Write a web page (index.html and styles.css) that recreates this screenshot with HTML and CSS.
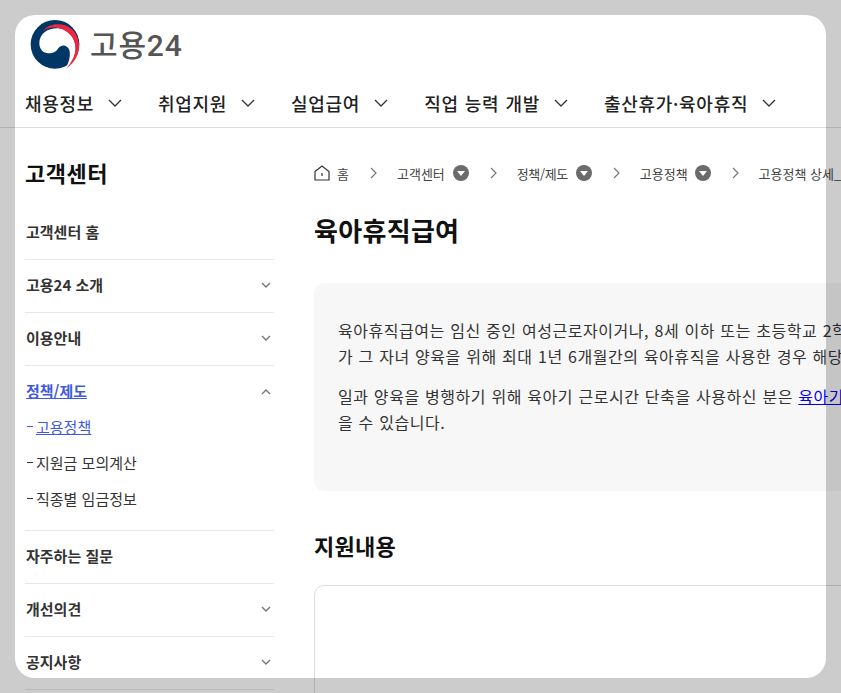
FILE: index.html
```html
<!DOCTYPE html>
<html lang="ko">
<head>
<meta charset="utf-8">
<title>고용24</title>
<link rel="stylesheet" href="styles.css">
</head>
<body>
<div class="page">
  <header class="header">
    <div class="brand">
      <svg class="logo" viewBox="0 0 150 150" aria-hidden="true">
        <circle cx="75" cy="73" r="73" fill="#003764"/>
        <path d="M28 70C28 40 55 25 80 25C115 25 137 55 137 85C137 110 125 130 108 142C118 125 122 105 118 90C112 75 95 72 85 85C78 97 68 100 55 100C40 100 28 88 28 70Z" fill="#fff"/>
        <path d="M38 34C55 10 100 4 128 30C156 58 156 115 108 146C142 110 144 70 122 46C97 18 57 17 38 34Z" fill="#ee2644"/>
      </svg>
      <span class="brand-name">고용24</span>
    </div>
    <nav class="gnb">
      <a class="gnb-item">채용정보<svg class="chev" viewBox="0 0 14 8"><path d="M1 1l6 6 6-6"/></svg></a>
      <a class="gnb-item">취업지원<svg class="chev" viewBox="0 0 14 8"><path d="M1 1l6 6 6-6"/></svg></a>
      <a class="gnb-item">실업급여<svg class="chev" viewBox="0 0 14 8"><path d="M1 1l6 6 6-6"/></svg></a>
      <a class="gnb-item">직업 능력 개발<svg class="chev" viewBox="0 0 14 8"><path d="M1 1l6 6 6-6"/></svg></a>
      <a class="gnb-item">출산휴가·육아휴직<svg class="chev" viewBox="0 0 14 8"><path d="M1 1l6 6 6-6"/></svg></a>
    </nav>
  </header>
  <div class="main">
    <aside class="side">
      <h2 class="side-title">고객센터</h2>
      <ul class="side-list">
        <li class="side-row"><span>고객센터 홈</span></li>
        <li class="side-row"><span>고용24 소개</span><svg class="mini" viewBox="0 0 10 6"><path d="M1 1l4 4 4-4"/></svg></li>
        <li class="side-row"><span>이용안내</span><svg class="mini" viewBox="0 0 10 6"><path d="M1 1l4 4 4-4"/></svg></li>
        <li class="side-group">
          <div class="side-row side-open"><a class="side-active">정책/제도</a><svg class="mini" viewBox="0 0 10 6"><path d="M1 5l4-4 4 4"/></svg></div>
          <ul class="sub-list">
            <li class="sub-item sub-current"><span class="dash"></span><a>고용정책</a></li>
            <li class="sub-item"><span class="dash"></span>지원금 모의계산</li>
            <li class="sub-item"><span class="dash"></span>직종별 임금정보</li>
          </ul>
        </li>
        <li class="side-row"><span>자주하는 질문</span></li>
        <li class="side-row"><span>개선의견</span><svg class="mini" viewBox="0 0 10 6"><path d="M1 1l4 4 4-4"/></svg></li>
        <li class="side-row"><span>공지사항</span><svg class="mini" viewBox="0 0 10 6"><path d="M1 1l4 4 4-4"/></svg></li>
      </ul>
    </aside>
    <main class="content">
      <div class="crumbs">
        <svg class="home" viewBox="0 0 16 16"><path d="M1 6.500L8 1l7 5.500V15H1Z"/><path d="M8 8v3"/></svg>
        <span class="crumb-home">홈</span>
        <svg class="sep" viewBox="0 0 7 12"><path d="M1 1l5 5-5 5"/></svg>
        <span>고객센터</span><i class="drop"></i>
        <svg class="sep" viewBox="0 0 7 12"><path d="M1 1l5 5-5 5"/></svg>
        <span class="crumb-slash">정책/제도</span><i class="drop"></i>
        <svg class="sep" viewBox="0 0 7 12"><path d="M1 1l5 5-5 5"/></svg>
        <span>고용정책</span><i class="drop drop-tight"></i>
        <svg class="sep" viewBox="0 0 7 12"><path d="M1 1l5 5-5 5"/></svg>
        <span>고용정책 상세_육아휴직급여</span>
      </div>
      <h1 class="title">육아휴직급여</h1>
      <section class="notice">
        <p>육아휴직급여는 임신 중인 여성근로자이거나, 8세 이하 또는 초등학교 2학년 이하의 자녀를 양육하는 근로자<br>가 그 자녀 양육을 위해 최대 1년 6개월간의 육아휴직을 사용한 경우 해당 기간 동안 지원받는 급여입니다.</p>
        <p>일과 양육을 병행하기 위해 육아기 근로시간 단축을 사용하신 분은 <a class="link">육아기 근로시간 단축 급여</a>를 받<br>을 수 있습니다.</p>
      </section>
      <h2 class="section-title">지원내용</h2>
      <div class="panel"></div>
    </main>
  </div>
  <div class="dim"></div>
</div>
</body>
</html>
```
FILE: styles.css
```css
* { box-sizing: border-box; }
html, body { margin: 0; padding: 0; overflow: hidden; }
body {
  width: 841px;
  height: 693px;
  background: #fff;
  font-family: "Noto Sans CJK KR", "Noto Sans", sans-serif;
  color: #222;
}
ul { list-style: none; margin: 0; padding: 0; }
.page { position: relative; width: 841px; height: 693px; overflow: hidden; }

.header { height: 128px; border-bottom: 1px solid #dcdcdc; padding-left: 25px; }
.brand { display: flex; align-items: center; height: 89px; padding-left: 5px; }
.logo { width: 50px; height: 50px; flex: none; }
.brand-name { margin-left: 10px; padding-top: 2px; font-size: 30px; font-weight: 500; color: #555; line-height: 1; letter-spacing: .8px; font-family: Roboto, "Noto Sans CJK KR", sans-serif; }
.gnb { display: flex; height: 28px; align-items: center; }
.gnb-item { display: flex; align-items: center; font-size: 18px; font-weight: 500; color: #222; letter-spacing: .7px; word-spacing: .4px; margin-right: 36px; white-space: nowrap; }
.chev { width: 14px; height: 8px; margin-left: 14px; fill: none; stroke: #333; stroke-width: 1.300; }

.main { display: flex; padding-left: 25px; }
.side { width: 249px; flex: none; }
.side-title { margin: 0; height: 79px; padding-top: 28px; font-size: 22px; line-height: 32px; font-weight: 700; color: #111; letter-spacing: .5px; }
.side-list > li { border-bottom: 1px solid #e8e8e8; }
.side-row { display: flex; align-items: center; justify-content: space-between; height: 53px; padding: 0 0 4px 1px; font-size: 15px; font-weight: 700; color: #333; }
.side-group .side-row { height: 43px; padding: 6px 0 0 1px; border: 0; }
.side-active { color: #3f5bdc; text-decoration: underline; }
.mini { width: 10px; height: 6px; margin-right: 3px; margin-top: 2px; fill: none; stroke: #777; stroke-width: 1.400; }
.sub-list { padding-bottom: 13px; }
.sub-item { display: flex; align-items: center; height: 36px; padding-bottom: 2px; font-size: 15px; color: #333; }
.dash { width: 6px; height: 1px; margin: 0 3px 0 2px; background: currentColor; flex: none; }
.sub-current { color: #3f5bdc; }
.sub-current a { text-decoration: underline; }

.content { margin-left: 40px; flex: none; width: 900px; }
.crumbs { display: flex; align-items: center; height: 30px; margin-top: 30px; font-size: 13px; color: #444; white-space: nowrap; }
.crumb-slash { letter-spacing: -.4px; }
.home { width: 16px; height: 16px; fill: none; stroke: #333; stroke-width: 1.200; flex: none; }
.crumb-home { margin-left: 7px; }
.sep { width: 7px; height: 12px; margin: 0 20px 0 21px; fill: none; stroke: #777; stroke-width: 1.200; flex: none; }
.drop { position: relative; display: block; width: 16px; height: 16px; margin-left: 8px; border-radius: 50%; background: #6b6b6b; flex: none; }
.drop-tight { margin-left: 7px; }
.drop::after { content: ""; position: absolute; left: 4px; top: 6px; border-left: 4px solid transparent; border-right: 4px solid transparent; border-top: 5px solid #fff; }
.title { margin: 23px 0 0; height: 40px; font-size: 26px; line-height: 38px; font-weight: 700; color: #111; letter-spacing: .3px; }
.notice { margin-top: 32px; height: 208px; padding: 34px 24px 0; background: #f7f7f7; border-radius: 10px; font-size: 16px; line-height: 26px; letter-spacing: .55px; word-spacing: .3px; color: #333; white-space: nowrap; }
.notice p { margin: 0 0 13px; }
.notice p:first-child { margin-bottom: 14px; }
.link { color: #00e; text-decoration: underline; }
.section-title { margin: 36px 0 0; height: 36px; font-size: 22px; line-height: 36px; font-weight: 700; color: #111; letter-spacing: .25px; }
.panel { margin-top: 22px; height: 300px; border: 1px solid #ddd; border-radius: 10px; }

.dim { position: absolute; left: 15px; top: 15px; width: 811px; height: 663px; border-radius: 20px; box-shadow: 0 0 0 900px rgba(0, 0, 0, .2); pointer-events: none; }
```
